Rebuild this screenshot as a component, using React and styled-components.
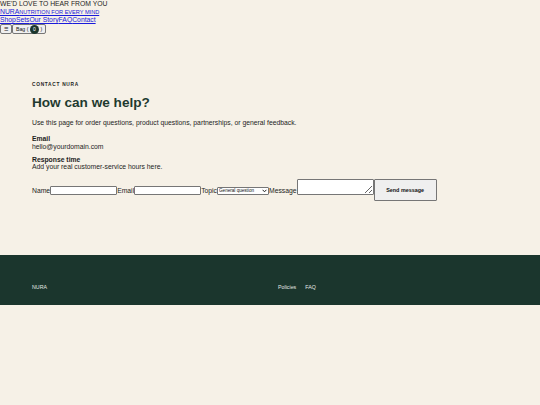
import React from "react";
import styled, { createGlobalStyle } from "styled-components";

const Global = createGlobalStyle`
  html, body {
    margin: 0;
    padding: 0;
    background: #f6f1e7;
  }
  body {
    font-family: "Liberation Sans", Arial, sans-serif;
    font-size: 6.8px;
    line-height: 1.15;
    color: #1d1d1d;
  }
`;

const Header = styled.header`
  display: flex;
  flex-direction: column;
  align-items: flex-start;
`;

const Announcement = styled.div`
  font-size: 6.8px;
  color: #1d1d1d;
  line-height: 8px;
`;

const BrandRow = styled.a`
  color: #1a1adb;
  text-decoration: underline;
  line-height: 7px;
  font-size: 6.8px;
`;

const Tagline = styled.span`
  font-size: 5.6px;
`;

const Nav = styled.nav`
  display: flex;
  line-height: 7px;
`;

const NavLink = styled.a`
  color: #1a1adb;
  text-decoration: underline;
  font-size: 6.8px;
`;

const Tools = styled.div`
  display: flex;
  margin-top: 1px;
`;

const ToolButton = styled.button`
  font-family: "Liberation Sans", Arial, sans-serif;
  font-size: 5.2px;
  height: 10px;
  padding: 0 3px;
  display: inline-flex;
  align-items: center;
  gap: 1.5px;
  background: #efefef;
  border: 1px solid #767676;
  border-radius: 2px;
  color: #111;
`;

const Badge = styled.span`
  display: inline-flex;
  align-items: center;
  justify-content: center;
  width: 9px;
  height: 9px;
  border-radius: 50%;
  background: #1b362d;
  color: #fff;
  font-size: 5px;
`;

const Main = styled.main`
  padding: 48px 32px 54px;
`;

const Eyebrow = styled.div`
  font-size: 4.8px;
  font-weight: 700;
  letter-spacing: 0.15em;
  color: #1d1d1d;
  text-transform: uppercase;
`;

const Title = styled.h1`
  margin: 7px 0 0;
  font-size: 13.6px;
  font-weight: 700;
  line-height: 1.15;
  color: #1f3a2f;
`;

const Lead = styled.p`
  margin: 9px 0 0;
  font-size: 6.8px;
  color: #1d1d1d;
`;

const InfoBlock = styled.div`
  margin-top: ${(p) => p.$gap}px;
  font-size: 6.8px;
`;

const InfoLabel = styled.div`
  font-weight: 700;
`;

const Form = styled.form`
  display: flex;
  align-items: flex-end;
  margin-top: 8px;
  font-size: 6.8px;
`;

const Label = styled.label`
  line-height: 8px;
  margin-bottom: 6px;
`;

const Input = styled.input`
  width: 63px;
  height: 5px;
  padding: 1px;
  margin: 0 0 6px;
  border: 1px solid #767676;
  border-radius: 1px;
  background: #fff;
  font-size: 5px;
`;

const Select = styled.select`
  appearance: none;
  width: 52px;
  height: 8px;
  margin: 0 0 6.5px;
  padding: 0 6px 0 1px;
  font-family: "Liberation Sans", Arial, sans-serif;
  font-size: 4.6px;
  line-height: 6px;
  border: 1px solid #767676;
  border-radius: 1px;
  background: #fff
    url("data:image/svg+xml,%3Csvg xmlns='http://www.w3.org/2000/svg' width='5' height='4' viewBox='0 0 5 4'%3E%3Cpath d='M0.6 0.8 L2.5 2.8 L4.4 0.8' fill='none' stroke='%23222' stroke-width='1'/%3E%3C/svg%3E")
    no-repeat right 1px center;
  color: #111;
`;

const Textarea = styled.textarea`
  width: 73px;
  height: 12px;
  padding: 1px;
  margin: 0 0 6px;
  border: 1px solid #767676;
  border-radius: 1px;
  background: #fff;
  resize: both;
  font-size: 5px;
`;

const Submit = styled.button`
  width: 63px;
  height: 22px;
  font-family: "Liberation Sans", Arial, sans-serif;
  font-size: 5.4px;
  font-weight: 700;
  background: #efefef;
  border: 1px solid #767676;
  border-radius: 1px;
  color: #111;
`;

const Footer = styled.footer`
  background: #1b362d;
  padding: 29px 32px 15px;
  display: grid;
  grid-template-columns: 1fr 1fr;
  column-gap: 16px;
  color: #e4e9e5;
  font-size: 5.3px;
`;

const FooterLinks = styled.div`
  display: flex;
  gap: 9px;
`;

const Frame = styled.div`
  display: flex;
  flex-direction: column;
`;

export default function App() {
  return (
    <Frame>
      <Global />
      <Header>
        <Announcement>WE'D LOVE TO HEAR FROM YOU</Announcement>
        <BrandRow href="#">
          NURA<Tagline>NUTRITION FOR EVERY MIND</Tagline>
        </BrandRow>
        <Nav>
          <NavLink href="#">Shop</NavLink>
          <NavLink href="#">Sets</NavLink>
          <NavLink href="#">Our Story</NavLink>
          <NavLink href="#">FAQ</NavLink>
          <NavLink href="#">Contact</NavLink>
        </Nav>
        <Tools>
          <ToolButton type="button">☰</ToolButton>
          <ToolButton type="button">
            Bag ( <Badge>0</Badge> )
          </ToolButton>
        </Tools>
      </Header>
      <Main>
        <Eyebrow>Contact Nura</Eyebrow>
        <Title>How can we help?</Title>
        <Lead>
          Use this page for order questions, product questions, partnerships, or general feedback.
        </Lead>
        <InfoBlock $gap={8}>
          <InfoLabel>Email</InfoLabel>
          <div>hello@yourdomain.com</div>
        </InfoBlock>
        <InfoBlock $gap={5}>
          <InfoLabel>Response time</InfoLabel>
          <div>Add your real customer-service hours here.</div>
        </InfoBlock>
        <Form onSubmit={(e) => e.preventDefault()}>
          <Label>Name</Label>
          <Input type="text" />
          <Label>Email</Label>
          <Input type="email" />
          <Label>Topic</Label>
          <Select defaultValue="General question">
            <option>General question</option>
          </Select>
          <Label>Message</Label>
          <Textarea />
          <Submit type="submit">Send message</Submit>
        </Form>
      </Main>
      <Footer>
        <div>NURA</div>
        <FooterLinks>
          <span>Policies</span>
          <span>FAQ</span>
        </FooterLinks>
      </Footer>
    </Frame>
  );
}
